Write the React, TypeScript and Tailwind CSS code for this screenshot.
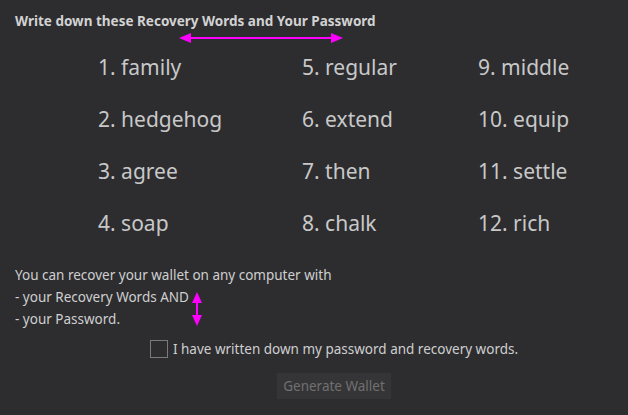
const words = [
  ['1. family', '5. regular', '9. middle'],
  ['2. hedgehog', '6. extend', '10. equip'],
  ['3. agree', '7. then', '11. settle'],
  ['4. soap', '8. chalk', '12. rich'],
];

const font = { fontFamily: '"Noto Sans", "Open Sans", sans-serif' };

export default function App() {
  return (
    <div className="relative w-[628px] h-[415px] overflow-hidden bg-[#2d2d30] pt-[12px]" style={font}>
      <h1 className="pl-[15px] text-[13.5px] leading-[18px] font-bold text-[#d2d2d2]">
        Write down these Recovery Words and Your Password
      </h1>

      <div className="mt-[11px] ml-[98px] grid grid-cols-[204px_176px_auto]">
        {words.flat().map(w => (
          <div key={w} className="h-[52px] text-[21px] leading-[52px] text-[#c8c8c8] whitespace-nowrap">{w}</div>
        ))}
      </div>

      <div className="mt-[15px] pl-[15px] text-[13.5px] leading-[22px] text-[#cfcfcf]">
        <p>You can recover your wallet on any computer with</p>
        <p>- your Recovery Words AND</p>
        <p>- your Password.</p>
      </div>

      <div className="pl-[40px] flex flex-col items-center">
        <label className="mt-[8px] h-[22px] flex items-center gap-[5px] text-[13.5px] text-[#cfcfcf]">
          <span className="w-[18px] h-[18px] border border-[#7a7a7a] bg-[#2d2d30]" />
          I have written down my password and recovery words.
        </label>
        <button className="mt-[13px] w-[114px] h-[26px] bg-[#353537] text-[13.5px] text-[#707070]">Generate Wallet</button>
      </div>

      {/* annotation arrows */}
      <svg className="absolute left-[177px] top-[32px]" width="168" height="12" viewBox="0 0 168 12">
        <line x1="10" y1="6" x2="158" y2="6" stroke="#ff00ff" strokeWidth="2" />
        <polygon points="2,6 14,1 14,11" fill="#ff00ff" />
        <polygon points="166,6 154,1 154,11" fill="#ff00ff" />
      </svg>
      <svg className="absolute left-[191px] top-[290px]" width="12" height="38" viewBox="0 0 12 38">
        <line x1="6" y1="8" x2="6" y2="30" stroke="#ff00ff" strokeWidth="2" />
        <polygon points="6,2 1,13 11,13" fill="#ff00ff" />
        <polygon points="6,36 1,25 11,25" fill="#ff00ff" />
      </svg>
    </div>
  );
}
